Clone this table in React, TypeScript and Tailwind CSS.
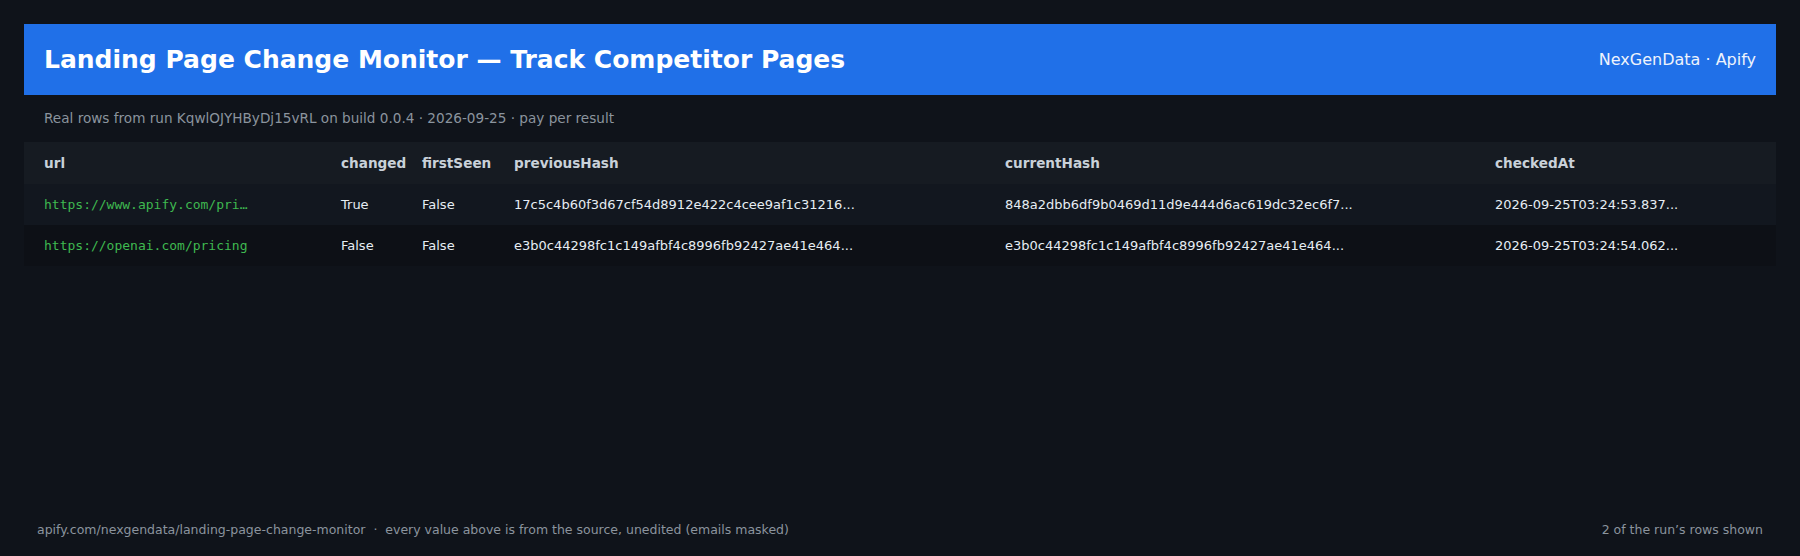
const columns = ['url', 'changed', 'firstSeen', 'previousHash', 'currentHash', 'checkedAt'];

const rows = [
  {
    url: 'https://www.apify.com/pri…',
    changed: 'True',
    firstSeen: 'False',
    previousHash: '17c5c4b60f3d67cf54d8912e422c4cee9af1c31216...',
    currentHash: '848a2dbb6df9b0469d11d9e444d6ac619dc32ec6f7...',
    checkedAt: '2026-09-25T03:24:53.837...',
  },
  {
    url: 'https://openai.com/pricing',
    changed: 'False',
    firstSeen: 'False',
    previousHash: 'e3b0c44298fc1c149afbf4c8996fb92427ae41e464...',
    currentHash: 'e3b0c44298fc1c149afbf4c8996fb92427ae41e464...',
    checkedAt: '2026-09-25T03:24:54.062...',
  },
];

const grid = 'grid grid-cols-[297px_81px_92px_491px_490px_301px]';

export default function App() {
  return (
    <div className="min-h-screen bg-[#0f131a] px-6 pt-6 flex flex-col font-['DejaVu_Sans',sans-serif]">
      <header className="h-[71px] bg-[#2070e8] flex items-center justify-between px-5">
        <h1 className="text-[25px] font-bold text-white">
          Landing Page Change Monitor — Track Competitor Pages
        </h1>
        <span className="text-[16px] text-[#eef3fc]">NexGenData · Apify</span>
      </header>

      <p className="px-5 pt-[14px] pb-[14px] text-[13.6px] leading-[19px] text-[#8b949e]">
        Real rows from run KqwlOJYHByDj15vRL on build 0.0.4 · 2026-09-25 · pay per result
      </p>

      <div className="text-[13px]">
        <div className={`${grid} h-[42px] items-center bg-[#161b22]`}>
          {columns.map((c) => (
            <div key={c} className="px-5 text-[13.6px] font-bold text-[#c9d1d9]">
              {c}
            </div>
          ))}
        </div>
        {rows.map((r, i) => (
          <div
            key={r.url}
            className={`${grid} h-[41px] items-center ${i === 0 ? 'bg-[#12171f]' : 'bg-[#0d1016]'}`}
          >
            <div className="px-5 font-['DejaVu_Sans_Mono',monospace] text-[#3fb950] whitespace-nowrap">{r.url}</div>
            <div className="px-5 text-[#e6edf3]">{r.changed}</div>
            <div className="px-5 text-[#e6edf3]">{r.firstSeen}</div>
            <div className="px-5 text-[#e6edf3] whitespace-nowrap">{r.previousHash}</div>
            <div className="px-5 text-[#e6edf3] whitespace-nowrap">{r.currentHash}</div>
            <div className="px-5 text-[#e6edf3] whitespace-nowrap">{r.checkedAt}</div>
          </div>
        ))}
      </div>

      <footer className="mt-auto flex justify-between px-[13px] pb-[18px] text-[12.5px] leading-4 text-[#8b949e]">
        <span>
          apify.com/nexgendata/landing-page-change-monitor &nbsp;·&nbsp; every value above is from the source, unedited (emails masked)
        </span>
        <span>2 of the run’s rows shown</span>
      </footer>
    </div>
  );
}
